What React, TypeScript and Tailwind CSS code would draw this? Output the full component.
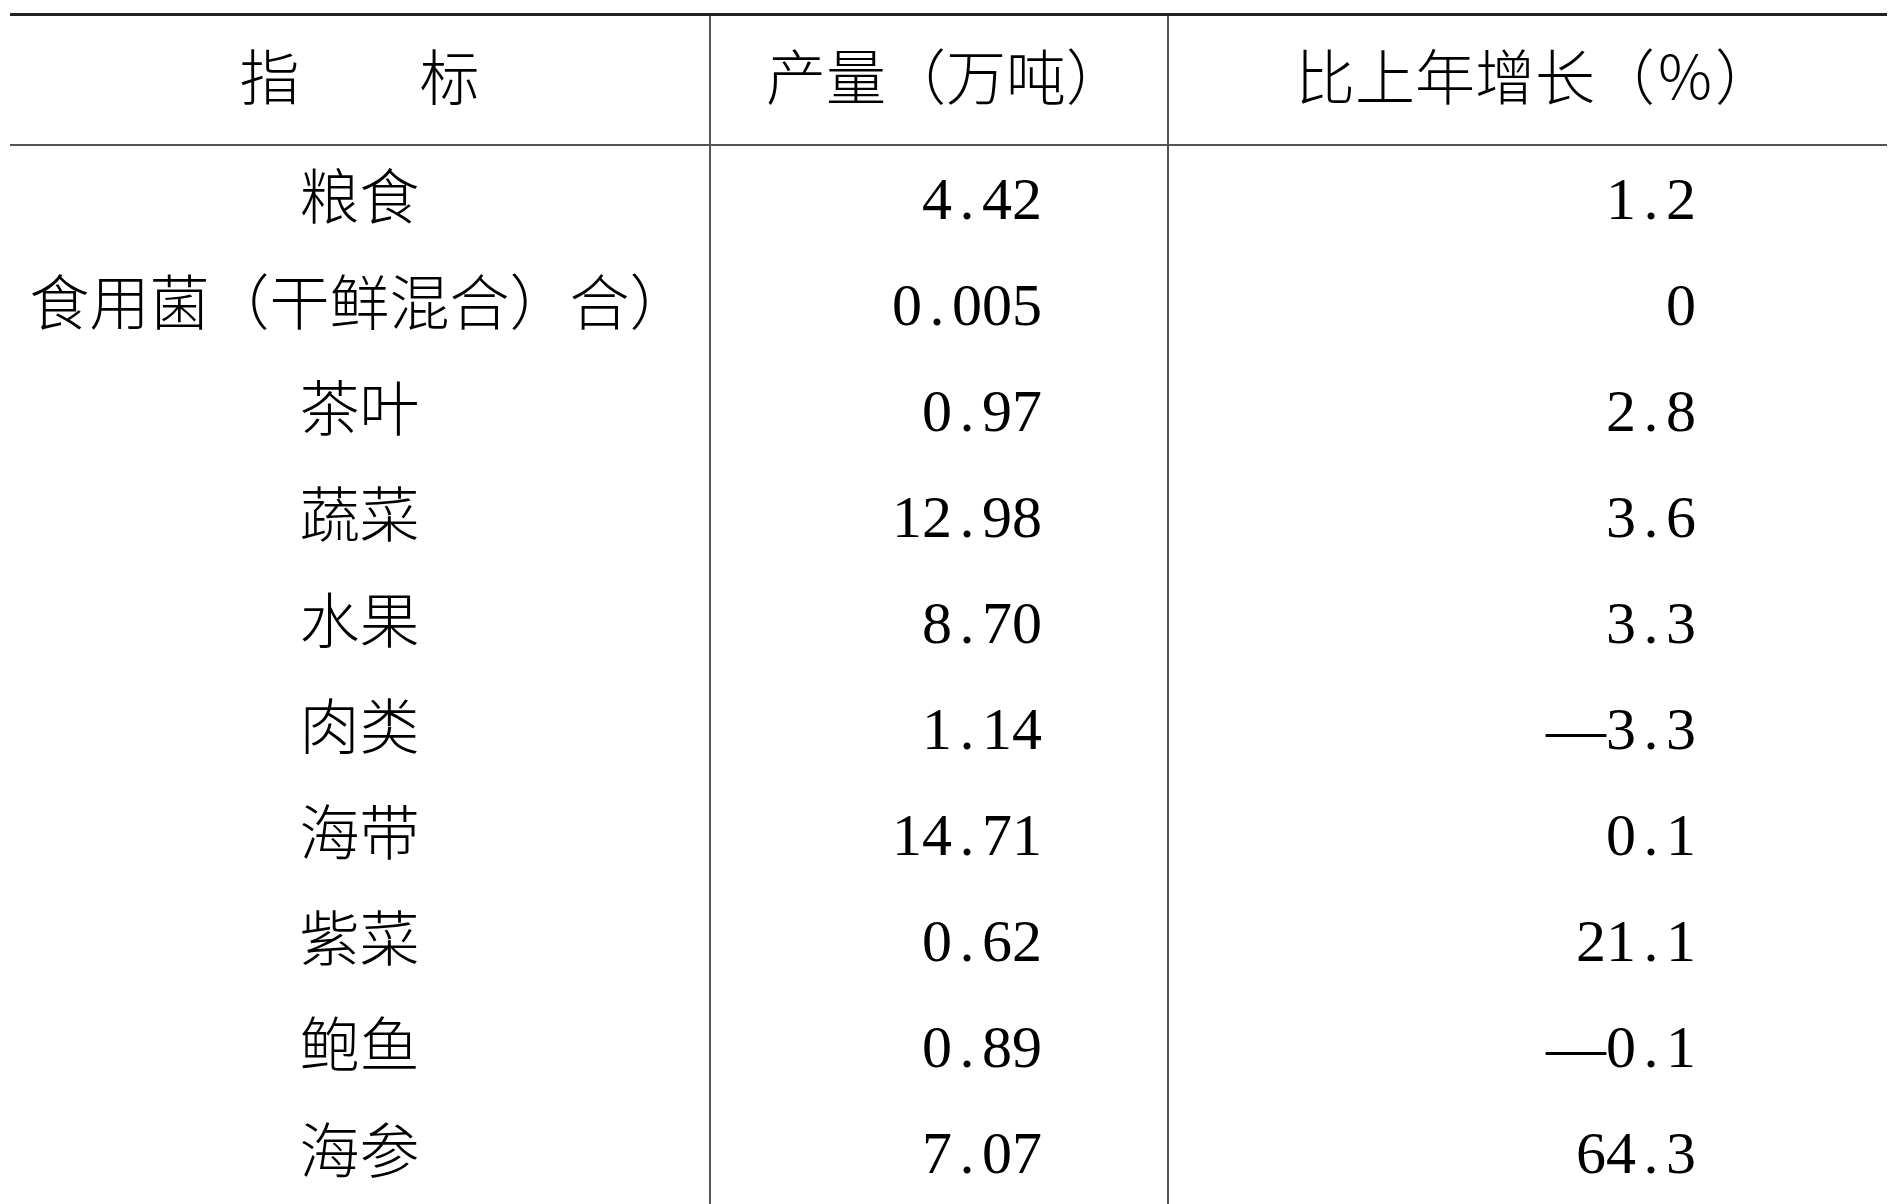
import React from 'react';

type Row = { name: string; output: string; growth: string };

const ROWS: Row[] = [
  { name: '粮食', output: '4.42', growth: '1.2' },
  { name: '食用菌（干鲜混合）合）', output: '0.005', growth: '0' },
  { name: '茶叶', output: '0.97', growth: '2.8' },
  { name: '蔬菜', output: '12.98', growth: '3.6' },
  { name: '水果', output: '8.70', growth: '3.3' },
  { name: '肉类', output: '1.14', growth: '—3.3' },
  { name: '海带', output: '14.71', growth: '0.1' },
  { name: '紫菜', output: '0.62', growth: '21.1' },
  { name: '鲍鱼', output: '0.89', growth: '—0.1' },
  { name: '海参', output: '7.07', growth: '64.3' },
];

// every CJK glyph on a whole-em grid, as in the printed page
function Cjk({ text }: { text: string }) {
  return (
    <span className="inline-flex whitespace-nowrap">
      {text.split('').map((ch, i) => (
        <span key={i} className="inline-block w-[1em] text-center">{ch}</span>
      ))}
    </span>
  );
}

// digits are set on a fixed half-em grid
function Num({ value }: { value: string }) {
  return (
    <span className="inline-flex">
      {value.split('').map((ch, i) =>
        ch === '—' ? (
          <span key={i} className="inline-block w-[1em] text-center">—</span>
        ) : (
          <span key={i} className="inline-block w-[0.5em] text-center">{ch}</span>
        ),
      )}
    </span>
  );
}

export default function App() {
  return (
    <div
      className="h-[1204px] w-[1889px] overflow-hidden bg-white pt-[13px] pl-[10px] font-light text-black"
      style={{ fontFamily: '"Liberation Serif", "Noto Sans CJK SC", serif' }}
    >
      <div className="w-[1877px] border-t-[3px] border-[#222]">
        {/* header */}
        <div className="grid h-[130px] grid-cols-[699px_458px_720px] border-b-2 border-[#555] text-[60px] leading-none">
          <div className="flex items-center justify-center"><Cjk text="指　　标" /></div>
          <div className="flex items-center justify-center border-l-2 border-[#555] pl-[14px]"><Cjk text="产量（万吨）" /></div>
          <div className="flex items-center justify-center border-l-2 border-[#555] pl-[14px]"><Cjk text="比上年增长（％）" /></div>
        </div>

        {/* body */}
        {ROWS.map((r) => (
          <div key={r.name} className="grid h-[106px] grid-cols-[699px_458px_720px] text-[60px] leading-none">
            <div className="flex items-center justify-center"><Cjk text={r.name} /></div>
            <div className="flex items-center justify-end border-l-2 border-[#555] pr-[125px]">
              <Num value={r.output} />
            </div>
            <div className="flex items-center justify-end border-l-2 border-[#555] pr-[191px]">
              <Num value={r.growth} />
            </div>
          </div>
        ))}
      </div>
    </div>
  );
}
